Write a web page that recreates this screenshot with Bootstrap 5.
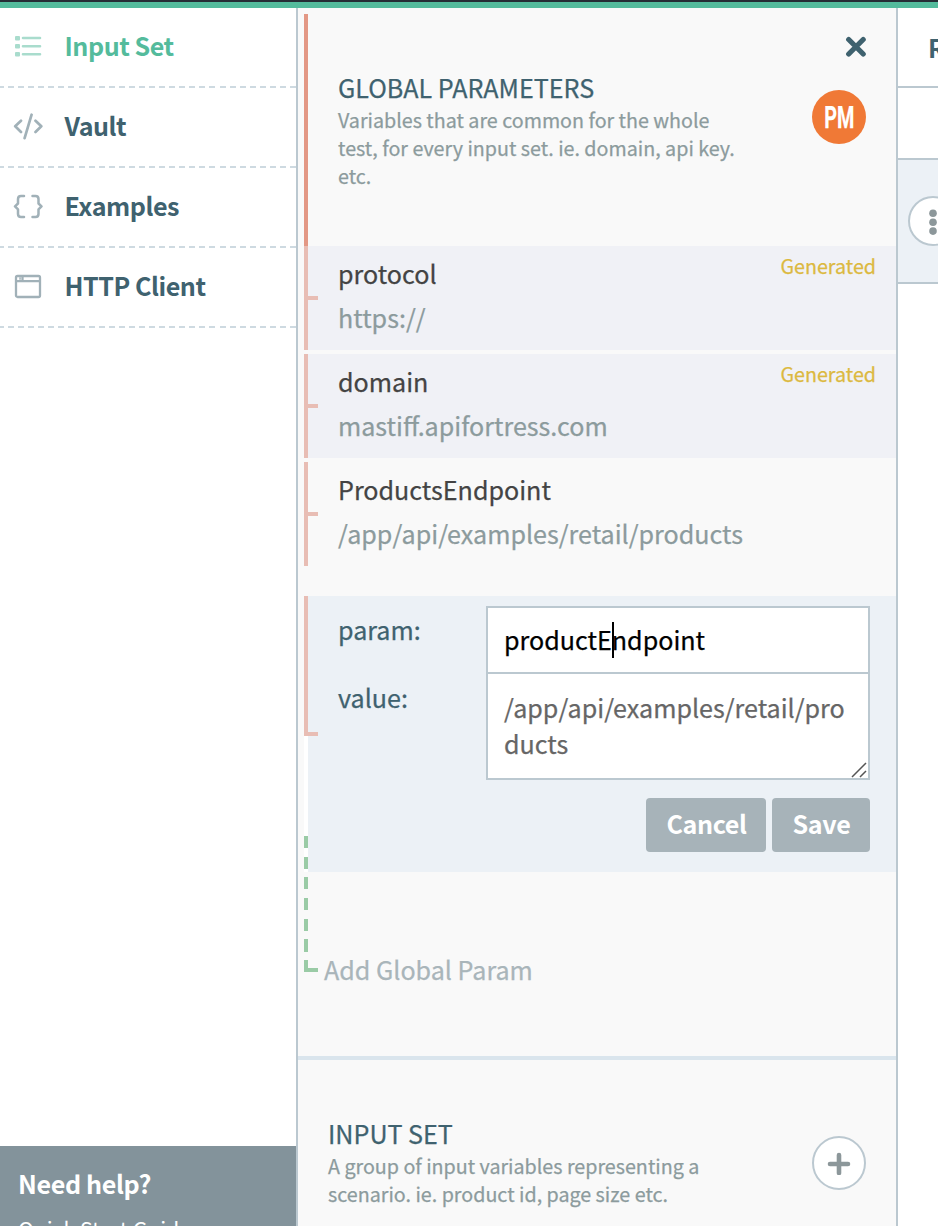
<!DOCTYPE html>
<html lang="en">
<head>
<meta charset="utf-8">
<meta name="viewport" content="width=device-width, initial-scale=1">
<title>Input Set</title>
<link href="https://cdn.jsdelivr.net/npm/bootstrap@5.3.0/dist/css/bootstrap.min.css" rel="stylesheet">
<style>
:root{--teal:#3f626f;--line:#bbc8d0;--muted:#8c9b9d;--rail:#e8bdb4}
body{font-family:"Source Sans Pro","Noto Sans CJK SC",sans-serif;font-size:25.1px;line-height:36px;color:#444;background:#fff}
.mid{-webkit-text-stroke:.25px currentColor}
.app{height:1226px}
.topline{height:8px;border-top:2px solid #262d35;background:#54bb9c}
.side{width:298px;border-right:2px solid var(--line)}
.side-item{height:80px;padding:19px 0 0 13px;color:var(--teal);font-weight:600;gap:22px;
 background:repeating-linear-gradient(90deg,#cedae1 0 6px,transparent 6px 10.07px) -2px 100%/310px 2px no-repeat}
.side-item svg{color:#a1b1b8;margin-top:4px}
.side-item.active{color:#54bb9c}.side-item.active svg{color:#a9dccd}
.side-text{letter-spacing:-.45px;margin-left:-.5px}
.help{height:80px;background:#83939b;color:#fff;padding:19px 18px 0}
.help-title{letter-spacing:-.35px}
.help-link{font-size:21.3px;line-height:36px;margin-top:10px}
.mid{width:600px;background:#f9f9f9;border-right:2px solid var(--line)}
.ghead{height:232px;margin:6px 0 0 6px;border-left:4px solid #e39885;padding:14px 30px 0 30px}
.close-x{margin:8px -1px -1px 0}
.ttl{color:var(--teal);height:37px}
.desc{font-size:19.7px;line-height:28px;color:var(--muted)}
.round{width:54px;height:54px;margin-top:21px}
.pm{background:#f07936;color:#fff}
.pm span{font:700 32px/54px Roboto,sans-serif;transform:scaleX(.62)}
.param{height:104px;margin:0 0 4px 6px;border-left:4px solid var(--rail);padding:5px 20px 0 30px;line-height:44px}
.param::before,.edit::before{content:"";position:absolute;left:0;top:50px;width:10px;height:4px;background:var(--rail)}
.generated-row{background:#f0f1f6}
.val{color:var(--muted)}
.tag{font-size:19.7px;line-height:28px;color:#dcb93f;margin-top:1px}
.edit{height:276px;margin:30px 0 0 6px;border-left:4px solid #fff;background:#ecf1f6;padding:10px 26px 0 30px;color:var(--teal)}
.edit::before{top:136px}
.edit::after{content:"";position:absolute;left:-4px;top:0;width:4px;height:140px;background:var(--rail)}
.lbl{width:148px;padding-top:5px}
.lbl div{height:68px}
.field{border:2px solid var(--line);border-radius:0;padding:13px 16px 0;line-height:36px;background:#fff}
.field.one{height:68px;color:#000}
.field.two{height:108px;margin-top:-2px;padding-top:15px;color:#666;word-break:break-all}
.caret{left:124px;top:14px;width:2px;height:36px;background:#000}
.grip{right:1px;bottom:0}
.btn-flat{height:54px;border:0;border-radius:4px;background:#a7b3b9;color:#fff;font-size:inherit;line-height:36px;font-weight:700;padding:7px 0 11px 1px;letter-spacing:-.35px;-webkit-text-stroke:0}
.addrow{height:184px;padding:79px 0 0 26px;color:#a9b5ba}
.addrow::before{content:"";position:absolute;left:6px;top:-36px;width:4px;height:136px;background:repeating-linear-gradient(#9acba6 0 12px,transparent 12px 20.7px)}
.addrow::after{content:"";position:absolute;left:6px;top:96px;width:14px;height:4px;background:#9acba6}
.iset{border-top:4px solid #dae5ed;padding:55px 30px 0}
.plus{border:2px solid var(--line);background:#fff}
.rcol{overflow:hidden}
.rhead{height:80px;padding:21px 0 0 30px;border-bottom:2px solid var(--line);color:var(--teal);font-weight:600}
.rblank{height:72px;border-bottom:2px solid var(--line)}
.rsel{height:124px;border-bottom:2px solid var(--line);background:#ecf1f6;padding:36px 0 0 10px}
.menu{width:50px;height:50px;border:2px solid var(--line);background:#fff}
</style>
</head>
<body>
<div class="app d-flex flex-column overflow-hidden">
 <header class="topline flex-shrink-0"></header>
 <div class="d-flex flex-grow-1 overflow-hidden">
  <aside class="side flex-shrink-0 d-flex flex-column">
   <a class="side-item active d-flex align-items-start text-decoration-none"><svg width="30" height="30" viewBox="0 0 30 30" fill="none" stroke="currentColor" stroke-width="2.6" stroke-linecap="round"><path d="M10 7h17M10 15.200h17M10 23.300h17"/><g fill="currentColor" stroke="none"><rect x="2" y="5" width="5" height="4.400" rx="1"/><rect x="2" y="13" width="5" height="4.400" rx="1"/><rect x="2" y="21" width="5" height="4.400" rx="1"/></g></svg><span class="side-text">Input Set</span></a>
   <a class="side-item d-flex align-items-start text-decoration-none"><svg width="30" height="30" viewBox="0 0 30 30" fill="none" stroke="currentColor" stroke-width="2.700" stroke-linecap="round" stroke-linejoin="round"><path d="M8 9.700 2.200 15.300 8 21M22.500 9.700l5.800 5.600-5.800 5.700M18.600 3.700l-7 23.400"/></svg><span class="side-text">Vault</span></a>
   <a class="side-item d-flex align-items-start text-decoration-none"><svg width="30" height="30" viewBox="0 0 30 30" fill="none" stroke="currentColor" stroke-width="2.500" stroke-linecap="round" stroke-linejoin="round"><path d="M11 5H8Q5 5 5 8v4.500L2 15.300l3 3V23q0 3 3 3h3M19.500 5h3q3 0 3 3v4.500l3 2.800-3 3V23q0 3-3 3h-3"/></svg><span class="side-text">Examples</span></a>
   <a class="side-item d-flex align-items-start text-decoration-none"><svg width="30" height="30" viewBox="0 0 30 30" fill="none" stroke="currentColor" stroke-width="2.300"><rect x="3" y="5" width="24" height="21" rx="1.500"/><path d="M3 10.200h24M6.300 7.500h1.500M9.500 5.500v4.500"/></svg><span class="side-text">HTTP Client</span></a>
   <div class="help mt-auto"><div class="help-title fw-bold">Need help?</div><div class="help-link">Quick Start Guide</div></div>
  </aside>
  <main class="mid flex-shrink-0">
   <section class="ghead">
    <div class="d-flex justify-content-end mb-2 pb-1"><svg width="22" height="22" viewBox="0 0 22 22" class="close-x" stroke="#3f626f" stroke-width="5.200" stroke-linecap="round"><path d="m3.700 3.500 14.500 14.500M18.200 3.500 3.700 18"/></svg></div>
    <div class="d-flex justify-content-between">
     <div><div class="ttl">GLOBAL PARAMETERS</div><div class="desc">Variables that are common for the whole<br>test, for every input set. ie. domain, api key.<br>etc.</div></div>
     <div class="round pm rounded-circle d-flex justify-content-center"><span>PM</span></div>
    </div>
   </section>
   <div class="param generated-row position-relative d-flex justify-content-between"><div><div>protocol</div><div class="val">https://</div></div><span class="tag">Generated</span></div>
   <div class="param generated-row position-relative d-flex justify-content-between"><div><div>domain</div><div class="val">mastiff.apifortress.com</div></div><span class="tag">Generated</span></div>
   <div class="param position-relative"><div>ProductsEndpoint</div><div class="val">/app/api/examples/retail/products</div></div>
   <section class="edit position-relative">
    <div class="d-flex">
     <div class="lbl flex-shrink-0"><div>param:</div><div>value:</div></div>
     <div class="flex-grow-1">
      <div class="field one position-relative">productEndpoint<i class="caret position-absolute"></i></div>
      <div class="field two position-relative">/app/api/examples/retail/products<svg class="grip position-absolute" width="16" height="16" viewBox="0 0 16 16" stroke="#555" stroke-width="1.500"><path d="M1 15 15 1M9 15l6-6"/></svg></div>
     </div>
    </div>
    <div class="d-flex justify-content-end" style="gap:6px;padding-top:18px"><button class="btn btn-flat" style="width:120px">Cancel</button><button class="btn btn-flat" style="width:98px">Save</button></div>
   </section>
   <div class="addrow position-relative">Add Global Param</div>
   <section class="iset d-flex justify-content-between">
    <div><div class="ttl">INPUT SET</div><div class="desc">A group of input variables representing a<br>scenario. ie. product id, page size etc.</div></div>
    <div class="round plus rounded-circle d-flex align-items-center justify-content-center"><svg width="24" height="24" viewBox="0 0 24 24" stroke="#8c979a" stroke-width="4.600" stroke-linecap="round"><path d="M12 4v18M3 13h18"/></svg></div>
   </section>
  </main>
  <section class="rcol flex-grow-1">
   <div class="rhead">R</div><div class="rblank"></div>
   <div class="rsel"><div class="menu rounded-circle"><svg width="46" height="46" viewBox="0 0 46 46" class="d-block" fill="#8c979a"><circle cx="23" cy="15.300" r="3.800"/><circle cx="23" cy="24.200" r="3.800"/><circle cx="23" cy="33.100" r="3.800"/></svg></div></div>
  </section>
 </div>
</div>
<script src="https://cdn.jsdelivr.net/npm/bootstrap@5.3.0/dist/js/bootstrap.bundle.min.js"></script>
</body>
</html>
